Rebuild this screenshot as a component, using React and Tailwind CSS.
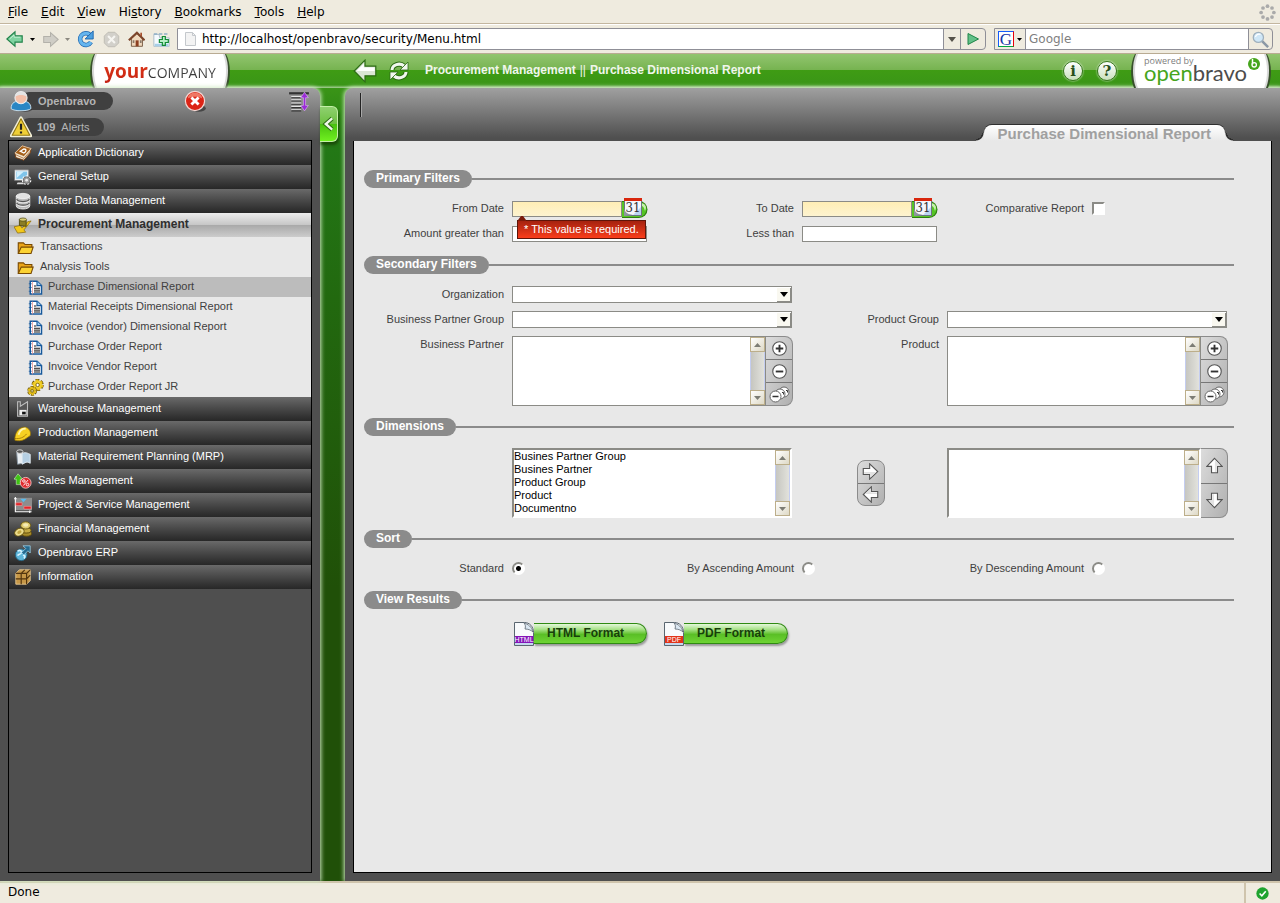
import { useState } from "react";

const MENUS = ["File", "Edit", "View", "History", "Bookmarks", "Tools", "Help"];
const MNEMONICS = { History: 2 };

const REPORTS = [
  "Purchase Dimensional Report",
  "Material Receipts Dimensional Report",
  "Invoice (vendor) Dimensional Report",
  "Purchase Order Report",
  "Invoice Vendor Report",
];

const DIMENSIONS = [
  "Busines Partner Group",
  "Busines Partner",
  "Product Group",
  "Product",
  "Documentno",
];

function Svg({ size = 20, children, className = "" }) {
  return (
    <svg
      width={size}
      height={size}
      viewBox="0 0 20 20"
      className={"shrink-0 " + className}
      aria-hidden="true"
    >
      {children}
    </svg>
  );
}

const moduleIcons = {
  dictionary: (
    <>
      <path d="M1 10 9 2l10 3-1 5-7 8L2 15z" fill="#f3ead8" stroke="#7a3c0c" />
      <path d="M1 10 9 2l10 3-8 9z" fill="#a5611c" stroke="#f4e6cf" strokeWidth=".8" />
      <path d="M2 12l9 4 7-8" fill="none" stroke="#9a5a20" strokeWidth=".8" />
      <path d="M7 8l4-2.500c3 0 3 3 0 4.500z" fill="none" stroke="#fff" strokeWidth="1.500" />
    </>
  ),
  setup: (
    <>
      <rect x="0.500" y="2" width="16" height="12" rx="1" fill="#e8eef2" stroke="#777" />
      <rect x="2.500" y="4" width="12" height="8" fill="#7fc4ea" />
      <path d="M3 11 11 4H3z" fill="#d3effc" />
      <path d="M4 16h6l1 2H3z" fill="#ddd" />
      <circle cx="14" cy="13.500" r="4" fill="#bbb" stroke="#fff" strokeWidth="2.500" strokeDasharray="2 1.500" />
      <circle cx="14" cy="13.500" r="3.800" fill="#999" stroke="#555" strokeWidth=".7" />
      <circle cx="14" cy="13.500" r="1.500" fill="#eee" />
    </>
  ),
  database: (
    <>
      <path d="M2.500 4.500v11c0 4.500 15 4.500 15 0v-11" fill="#b9b9b9" stroke="#e8e8e8" />
      <ellipse cx="10" cy="4.500" rx="7.500" ry="3" fill="#e2e2e2" stroke="#fff" strokeWidth=".7" />
      <path d="M3 8c1 3.500 13 3.500 14 0M3 12c1 3.500 13 3.500 14 0" fill="none" stroke="#555" strokeWidth="1.300" />
      <path d="M3 9.500c1 3.500 13 3.500 14 0M3 13.500c1 3.500 13 3.500 14 0" fill="none" stroke="#fff" strokeWidth=".8" />
    </>
  ),
  procurement: (
    <>
      <path d="M0 12l4 7 9-1-2-2.500 8-10-4 1-6 7-2-3z" fill="#f2c81a" stroke="#8b6a0a" strokeWidth=".8" />
      <path d="M6 3.500v7l7.500 1V4.500z" fill="#8a7d24" stroke="#4f470f" />
      <ellipse cx="10" cy="4" rx="4" ry="1.800" fill="#d8cd73" stroke="#4f470f" strokeWidth=".8" />
    </>
  ),
  warehouse: (
    <>
      <path d="M4 8V2h3v5l8-5v16H4z" fill="#555" stroke="#bdbdbd" strokeWidth="1.200" />
      <path d="M6 11h8v6H6z" fill="#eee" />
      <path d="M9 13h4v3H9z" fill="#111" />
    </>
  ),
  helmet: (
    <>
      <path d="M1 15C2 6 9 2 14 4c4 2 5 6 4 9l-6 4c-4 2-8 2-11 1z" fill="#f6d022" stroke="#8f6b05" strokeWidth=".8" />
      <path d="M5 12c1-4 4-7 8-7" fill="none" stroke="#fff6b0" strokeWidth="2" />
      <path d="M1 16c5 1 10-1 13-5" fill="none" stroke="#a87a05" />
    </>
  ),
  mrp: (
    <>
      <path d="M3 5 9 3l1 14-6 1z" fill="#e9eef2" stroke="#8795a3" />
      <path d="M9 6c4-2 6 0 9 1v10c-4-3-6 0-9 1z" fill="#b5cfe3" stroke="#e9f1f7" />
      <ellipse cx="6.500" cy="4" rx="3.500" ry="2" fill="#555" stroke="#ddd" />
    </>
  ),
  sales: (
    <>
      <path d="M4.500 2 9.500 8H7v6H2.500V8H0z" fill="#3fc414" stroke="#d8f5cc" strokeWidth=".6" />
      <circle cx="13" cy="12" r="6" fill="#e02a2f" stroke="#f7c3c3" />
      <circle cx="11" cy="10" r="1.400" fill="none" stroke="#fff" />
      <circle cx="15" cy="14" r="1.400" fill="none" stroke="#fff" />
      <path d="M10.500 15 15.500 9" stroke="#fff" />
    </>
  ),
  project: (
    <>
      <rect x="1" y="2" width="19" height="14" fill="#8d8d8d" />
      <path d="M1.500 1v16.500h18M0 3h3M17.500 16v3" fill="none" stroke="#fff" strokeWidth="1.200" />
      <path d="M7 3h7l-3.500 4z" fill="#59bdf0" />
      <path d="M2 7.500h7v3H2zM11 11.500h8v3h-8z" fill="#e3262a" stroke="#f5a6a6" strokeWidth=".6" />
    </>
  ),
  coins: (
    <>
      <ellipse cx="14" cy="15" rx="5.500" ry="3" fill="#a98d2a" stroke="#5c4a0c" />
      <ellipse cx="13.500" cy="11.500" rx="5.500" ry="3" fill="#c5ab45" stroke="#5c4a0c" />
      <ellipse cx="13" cy="6" rx="5.500" ry="4" fill="#e0cd72" stroke="#6c5810" />
      <ellipse cx="13" cy="5.500" rx="3" ry="2" fill="#f5ebb5" />
      <ellipse cx="6" cy="13.500" rx="5.500" ry="4" fill="#ecdc8c" stroke="#6c5810" transform="rotate(-28 6 13.500)" />
      <ellipse cx="6" cy="13.500" rx="2.500" ry="1.800" fill="#c2a841" transform="rotate(-28 6 13.500)" />
    </>
  ),
  globe: (
    <>
      <circle cx="8" cy="12" r="6.500" fill="#5db4d8" stroke="#245f7b" />
      <path d="M4 8c3-2 5 0 4 2s-3 1-4 3M10 13c2-1 3 1 1 3" fill="none" stroke="#d7f3ff" strokeWidth="1.800" />
      <path d="M10 2h8v8l-2.500-2.500L11 12 8.500 9.500 13 5z" fill="#246a90" stroke="#a9dcf3" strokeWidth=".8" />
    </>
  ),
  crate: (
    <>
      <path d="M2 6l4-4h12v12l-4 4H2z" fill="#c69747" stroke="#e6c893" />
      <path d="M2 6h12v12M14 6l4-4M8 6v12M2 12h12l4-4M8 6l4-4" fill="none" stroke="#53350e" strokeWidth="1.300" />
    </>
  ),
};

function FolderIcon() {
  return (
    <Svg size={17}>
      <path d="M1.500 16.500v-12h6l2 2h8v3" fill="#e9a41a" stroke="#7a4a03" strokeWidth="1.300" />
      <path d="M1.500 17 5 9.500h14L16.500 17z" fill="#fbd233" stroke="#7a4a03" strokeWidth="1.300" />
    </Svg>
  );
}

function ReportIcon() {
  return (
    <Svg size={15}>
      <path d="M3 1.500h9l6 6v11H3z" fill="#fff" stroke="#17599c" strokeWidth="2" />
      <path d="M12 1.500v6h6" fill="#9cc9ef" stroke="#17599c" strokeWidth="1.500" />
      <path d="M8 8h3M8 11h8M8 13.500h8M8 16h8" stroke="#111" strokeWidth="1.300" />
      <path d="M6 2v17" stroke="#e58c8c" />
      <path d="M1 5h4M1 10h4M1 15h4" stroke="#17599c" />
    </Svg>
  );
}

function GearsIcon() {
  return (
    <Svg size={17}>
      <circle cx="12.500" cy="7" r="5.500" fill="none" stroke="#6d570a" strokeWidth="3.500" strokeDasharray="4 1.760" />
      <circle cx="12.500" cy="7" r="5.500" fill="#f2d02c" stroke="#e8c21d" strokeWidth="2" strokeDasharray="3 2.760" />
      <circle cx="12.500" cy="7" r="2" fill="#fff" stroke="#6d570a" />
      <circle cx="6" cy="14" r="4" fill="none" stroke="#6d570a" strokeWidth="3.500" strokeDasharray="3.200 .99" />
      <circle cx="6" cy="14" r="4" fill="#d9b516" stroke="#e8c21d" strokeWidth="2" strokeDasharray="2.400 1.790" />
      <circle cx="6" cy="14" r="1.500" fill="#fff6c2" stroke="#6d570a" />
    </Svg>
  );
}

function ToolButton({ label, children, className = "" }) {
  return (
    <button type="button" aria-label={label} className={"flex items-center justify-center " + className}>
      {children}
    </button>
  );
}

function Caret({ className = "text-black" }) {
  return (
    <svg width="5" height="3" viewBox="0 0 5 3" className={className} aria-hidden="true">
      <path d="M0 0h5L2.500 3z" fill="currentColor" />
    </svg>
  );
}

function BrowserChrome() {
  return (
    <div className="bg-[#efebdf] font-['DejaVu_Sans',sans-serif] text-[12px] text-black">
      <div className="flex h-6 items-center justify-between border-b border-[#c3b69f] pl-2 pr-1 pt-px">
        <nav className="flex gap-[13px]">
          {MENUS.map((name) => {
            const at = MNEMONICS[name] ?? 0;
            return (
              <button key={name} type="button">
                {name.slice(0, at)}
                <u>{name[at]}</u>
                {name.slice(at + 1)}
              </button>
            );
          })}
        </nav>
        <Svg size={17}>
          <g fill="#aaa">
            <circle cx="10" cy="2.500" r="2.200" />
            <circle cx="15.300" cy="4.700" r="2.200" />
            <circle cx="17.500" cy="10" r="2.200" />
            <circle cx="15.300" cy="15.300" r="2.200" />
            <circle cx="10" cy="17.500" r="2.200" />
            <circle cx="4.700" cy="15.300" r="2.200" />
            <circle cx="2.500" cy="10" r="2.200" />
            <circle cx="4.700" cy="4.700" r="2.200" />
          </g>
        </Svg>
      </div>

      <div className="flex h-[30px] items-center border-b border-t border-b-[#b9ab92] border-t-white pl-1.5 pr-[7px]">
        <ToolButton label="Back">
          <Svg size={18}>
            <path d="M1 10 10 2v4.500h8v7h-8V18z" fill="#7ed3a0" stroke="#23834b" strokeWidth="1.300" />
            <path d="M4 10 9 5.500v2.500h7" fill="none" stroke="#c8f2d6" />
          </Svg>
        </ToolButton>
        <ToolButton label="Back history" className="w-4"><Caret /></ToolButton>
        <ToolButton label="Forward" className="ml-0.5">
          <Svg size={17}>
            <path d="M19 10 10 2v4.500H2v7h8V18z" fill="#cfcdc6" stroke="#b3b1aa" strokeWidth="1.200" />
          </Svg>
        </ToolButton>
        <ToolButton label="Forward history" className="w-4"><Caret className="text-[#8b8880]" /></ToolButton>
        <ToolButton label="Reload" className="ml-0.5">
          <Svg size={18}>
            <path d="M15.500 13.500a6.500 6.500 0 1 1-1-8" fill="none" stroke="#1c64ad" strokeWidth="5" />
            <path d="M15.500 13.500a6.500 6.500 0 1 1-1-8" fill="none" stroke="#65b5ee" strokeWidth="3.500" />
            <path d="M18 1v9H9z" fill="#4b9fe0" stroke="#1c64ad" />
          </Svg>
        </ToolButton>
        <ToolButton label="Stop" className="ml-2">
          <Svg size={17}>
            <path d="M6 1.500h8L18.500 6v8L14 18.500H6L1.500 14V6z" fill="#d2d0ca" stroke="#bbb8b0" />
            <path d="m6 6 8 8M14 6l-8 8" stroke="#f6f5f1" strokeWidth="2.500" />
          </Svg>
        </ToolButton>
        <ToolButton label="Home" className="ml-2">
          <Svg size={17}>
            <path d="M4 9v9h13V9l-6.500-6z" fill="#f0d9be" stroke="#6c4c34" />
            <path d="M1 11 10.500 2l9 9" fill="none" stroke="#7d452b" strokeWidth="2.500" />
            <path d="M14.500 2h2v4h-2z" fill="#a6502f" />
            <path d="M9 11h3.500v7H9z" fill="#8c3f21" />
            <path d="M5.500 11h2v3h-2zM14 11h2v3h-2z" fill="#8a7a6b" />
          </Svg>
        </ToolButton>
        <ToolButton label="New tab" className="ml-2">
          <Svg size={17}>
            <path d="M1 8V4h6l1 4h11v10H1z" fill="#f4fafe" stroke="#a3b6c4" />
            <path d="M1 3.500h4M7 3.500h4M13 3.500h4" stroke="#8fb0c8" strokeWidth="2" />
            <path d="M2 15h16v3H2z" fill="#a8cfe8" />
            <path d="M11 6.500h3.500v3.500H18v3.500h-3.500V17H11v-3.500H7.500V10H11z" fill="#b9f0c8" stroke="#128a36" strokeWidth="1.400" />
          </Svg>
        </ToolButton>

        <div className="ml-[7px] flex h-[22px] min-w-0 flex-1 rounded-r border border-[#8f8f97]">
          <span className="flex w-6 shrink-0 items-center justify-center bg-white">
            <svg width="11" height="14" viewBox="0 0 11 14" aria-hidden="true">
              <path d="M.5.5h7l3 3v10H.5z" fill="#f3f3f3" stroke="#c4c8cc" />
              <path d="M7.500.5v3h3" fill="none" stroke="#c4c8cc" />
            </svg>
          </span>
          <input
            type="text"
            aria-label="Address"
            defaultValue="http://localhost/openbravo/security/Menu.html"
            className="min-w-0 flex-1 bg-white outline-none"
          />
          <ToolButton label="Show history" className="w-[17px] border-l border-[#8f8f97] text-[#55524a]">
            <svg width="8" height="5" viewBox="0 0 8 5" aria-hidden="true"><path d="M0 0h8L4 5z" fill="currentColor" /></svg>
          </ToolButton>
          <ToolButton label="Go" className="w-[25px] border-l border-[#8f8f97]">
            <svg width="12" height="12" viewBox="0 0 12 12" aria-hidden="true">
              <path d="M1 .5 11.500 6 1 11.500z" fill="#63c088" stroke="#1e8548" />
            </svg>
          </ToolButton>
        </div>

        <div className="ml-2 flex h-[22px] w-[279px] rounded-r border border-[#8f8f97]">
          <ToolButton label="Search engine" className="w-[31px] gap-[3px] border-r border-[#8f8f97]">
            <span className="flex h-4 w-4 items-center justify-center border border-b-green-600 border-l-blue-600 border-r-red-600 border-t-blue-600 bg-white font-['Liberation_Serif',serif] text-[17px] leading-none text-[#1736a8]">
              G
            </span>
            <Caret />
          </ToolButton>
          <input
            type="text"
            aria-label="Search"
            placeholder="Google"
            className="min-w-0 flex-1 bg-white px-[3px] outline-none placeholder:text-[#808080]"
          />
          <ToolButton label="Search" className="w-6 border-l border-[#8f8f97]">
            <Svg size={17}>
              <path d="m11 11 8 8" stroke="#8b98a5" strokeWidth="3" />
              <circle cx="7.500" cy="7.500" r="6" fill="#cfe7f7" stroke="#9fb0bd" strokeWidth="1.500" />
              <path d="M4 7c1-3 4-4 6-3" fill="none" stroke="#fff" strokeWidth="1.500" />
            </Svg>
          </ToolButton>
        </div>
      </div>
    </div>
  );
}

function RoundBadge({ label, glyph }) {
  return (
    <button
      type="button"
      aria-label={label}
      className="flex h-5 w-5 items-center justify-center rounded-full border border-[#3a7a20] bg-linear-to-b from-white to-[#c9e0bd] font-['DejaVu_Serif',serif] text-[15px] font-bold leading-none text-[#28501c] shadow-[0_0_2px_#ffffff]"
    >
      {glyph}
    </button>
  );
}

function LogoPlate({ children }) {
  return (
    <div className="relative h-[34px] w-[140px] shrink-0">
      <svg width="140" height="34" viewBox="0 0 140 34" className="absolute inset-0" aria-hidden="true">
        <path d="M4 0h132c5 9 5 24 1 34H3C-1 24-1 9 4 0z" fill="#38502c" />
        <path d="M5 0h130c4 9 4 24 0 34H5C1 24 1 9 5 0z" fill="#d9d9d9" />
        <path d="M7 0h126c4 10 4 24 0 34H7C3 24 3 10 7 0z" fill="#fff" />
      </svg>
      <div className="relative h-full">{children}</div>
    </div>
  );
}

function TopBar() {
  return (
    <header className="flex h-[34px] shrink-0 bg-[linear-gradient(#92c56f_0px,#76b350_16px,#3f9c14_16px,#3a9517_31px,#a8d098_34px)]">
      <div className="w-[345px] shrink-0 pl-[90px]">
        <LogoPlate>
          <div className="flex h-full items-baseline justify-center pt-0.5 font-['Open_Sans',sans-serif] leading-[30px]">
            <span className="bg-linear-to-b from-[#e8401c] to-[#c01c10] bg-clip-text text-[19px] font-bold text-transparent">
              your
            </span>
            <span className="bg-linear-to-b from-[#777777] to-[#111111] bg-clip-text text-[14px] text-transparent">
              COMPANY
            </span>
          </div>
        </LogoPlate>
      </div>
      <div className="flex flex-1 items-center pl-2">
        <button type="button" aria-label="Go back">
          <Svg size={24}>
            <path d="M1 10 10 1v5h9v8h-9v5z" fill="#dbe6d6" stroke="#2c6b14" />
            <path d="M3 10 9 4v3h9v3z" fill="#fff" />
          </Svg>
        </button>
        <button type="button" aria-label="Refresh" className="ml-3">
          <Svg size={20}>
            <g fill="none">
              <path d="M3 9a7 6 0 0 1 12-4M17 11a7 6 0 0 1-12 4" stroke="#2c6b14" strokeWidth="5" />
              <path d="M3 9a7 6 0 0 1 12-4M17 11a7 6 0 0 1-12 4" stroke="#f1f7ee" strokeWidth="3" />
            </g>
            <path d="M19 1v8h-8zM1 19v-8h8z" fill="#f1f7ee" stroke="#2c6b14" strokeWidth=".8" />
          </Svg>
        </button>
        <h2 className="ml-4 flex gap-1 pb-0.5 text-[12px] font-bold text-[#f0f6ec]">
          <span>Procurement Management</span>
          <span className="font-normal">||</span>
          <span>Purchase Dimensional Report</span>
        </h2>
      </div>
      <div className="flex items-center gap-3.5 pr-[9px]">
        <RoundBadge label="About" glyph="i" />
        <RoundBadge label="Help" glyph="?" />
        <LogoPlate>
          <div className="flex flex-col pl-[13px] pt-0.5">
            <span className="font-['Open_Sans',sans-serif] text-[9px] leading-[10px] text-[#808080]">powered by</span>
            <span className="font-['Lato',sans-serif] text-[22px] leading-[14px] text-[#4c4c4c]">
              <span className="text-[#46a51c]">open</span>bravo
            </span>
          </div>
          <svg width="12" height="12" viewBox="0 0 12 12" className="absolute right-[11px] top-1" aria-hidden="true">
            <circle cx="6" cy="6" r="6" fill="#46a51c" />
            <path d="M4.500 1v5.500" stroke="#fff" strokeWidth="1.500" />
            <circle cx="6.200" cy="6.800" r="2.200" fill="none" stroke="#fff" strokeWidth="1.300" />
          </svg>
        </LogoPlate>
      </div>
    </header>
  );
}

function ModuleRow({ icon, children, active = false }) {
  return (
    <button
      type="button"
      className={
        active
          ? "flex h-6 w-full items-center gap-1 bg-[linear-gradient(#ececec,#c6c6c6_50%,#aaaaaa_52%,#cccccc)] pl-1 text-left text-[12px] font-bold text-[#2f2f2f]"
          : "flex h-6 w-full items-center gap-1 bg-linear-to-b from-[#6a6a6a] to-[#272727] pl-1 text-left text-[11px] text-white"
      }
    >
      <Svg size={20} className="p-px">{moduleIcons[icon]}</Svg>
      <span className="ml-px pb-0.5">{children}</span>
    </button>
  );
}

function TreeRow({ icon, children, nested = false, selected = false }) {
  return (
    <a
      href="#"
      className={
        "flex h-5 items-center text-[11px] text-[#3f3f3f] " +
        (nested ? "gap-1 pl-[18px] " : "gap-1.5 pl-2 ") +
        (selected ? "bg-[#bcbcbc]" : "")
      }
    >
      <span className="flex w-[17px] justify-center">{icon}</span>
      <span className="pb-0.5">{children}</span>
    </a>
  );
}

function Sidebar() {
  return (
    <aside className="z-10 flex w-80 shrink-0 flex-col rounded-tr-lg bg-[#4f4f4f] bg-[linear-gradient(#a0a0a0_0px,#4f4f4f_52px)] px-2 pb-2 shadow-[0_0_4px_1px_#d4ecc8]">
      <div className="flex h-[26px] items-center">
        <div className="flex items-center">
          <Svg size={22} className="z-10 ml-0.5">
            <ellipse cx="13" cy="18" rx="7" ry="2" fill="#222" opacity=".5" />
            <path d="M1 17c0-6 4-7 9-7s9 1 9 7c-3 2.500-15 2.500-18 0z" fill="#2a86c4" stroke="#d7ebf7" strokeWidth=".8" />
            <circle cx="10" cy="7" r="5.500" fill="#f4bfa8" stroke="#eee" />
            <path d="M4.500 6C5 0 15 0 15.500 6c-3-2-8-2-11 0z" fill="#e4e4e4" />
          </Svg>
          <span className="-ml-3 flex h-[18px] w-[93px] items-center rounded-full bg-[#404040] pl-[18px] text-[11px] font-bold text-[#b4b4b4]">
            Openbravo
          </span>
        </div>
        <button type="button" aria-label="Log out" className="ml-[70px]">
          <Svg size={24}>
            <ellipse cx="13" cy="16" rx="6" ry="3" fill="#222" opacity=".6" />
            <circle cx="10" cy="10" r="8" fill="#dc2416" stroke="#f3d8d4" />
            <path d="M4 8a6 5 0 0 1 12 0c-3-2-9-2-12 0z" fill="#f07765" />
            <path d="m7 7 6 6M13 7l-6 6" stroke="#fff" strokeWidth="2.400" />
          </Svg>
        </button>
        <button type="button" aria-label="Expand menu" className="ml-auto mr-0.5">
          <Svg size={22}>
            <path d="M1 2h18v2H1z" fill="#333" />
            <path d="M3 6h9M3 9h9M3 12h9M3 15h9M3 18h9" stroke="#e3e3e3" strokeWidth="1.200" />
            <path d="M3 7h9M3 10h9M3 13h9M3 16h9M3 19h9" stroke="#333" />
            <path d="m15 2 3.500 5H16v7h2.500L15 19l-3.500-5H14V7h-2.500z" fill="#9a2bd8" stroke="#e6c4f7" strokeWidth=".5" />
          </Svg>
        </button>
      </div>
      <div className="flex h-[26px] items-center">
        <Svg size={22} className="z-10 ml-0.5">
          <path d="M10 1.500 19 18H1z" fill="#f7dc55" stroke="#f3f0d8" strokeWidth="2.500" strokeLinejoin="round" />
          <path d="M10 2.500 18 17.500H2z" fill="#f0cf36" stroke="#927714" strokeLinejoin="round" />
          <path d="M10 7v5.500M10 14v2" stroke="#222" strokeWidth="2" />
        </Svg>
        <a
          href="#"
          className="-ml-3 flex h-[18px] w-[84px] items-center gap-1.5 rounded-full bg-[#404040] pl-[17px] text-[11px] text-[#b4b4b4]"
        >
          <b>109</b> Alerts
        </a>
      </div>

      <nav className="flex-1 border border-black">
        <ModuleRow icon="dictionary">Application Dictionary</ModuleRow>
        <ModuleRow icon="setup">General Setup</ModuleRow>
        <ModuleRow icon="database">Master Data Management</ModuleRow>
        <ModuleRow icon="procurement" active>Procurement Management</ModuleRow>
        <div className="bg-[#e8e8e8]">
          <TreeRow icon={<FolderIcon />}>Transactions</TreeRow>
          <TreeRow icon={<FolderIcon />}>Analysis Tools</TreeRow>
          {REPORTS.map((name, i) => (
            <TreeRow key={name} icon={<ReportIcon />} nested selected={i === 0}>
              {name}
            </TreeRow>
          ))}
          <TreeRow icon={<GearsIcon />} nested>Purchase Order Report JR</TreeRow>
        </div>
        <ModuleRow icon="warehouse">Warehouse Management</ModuleRow>
        <ModuleRow icon="helmet">Production Management</ModuleRow>
        <ModuleRow icon="mrp">Material Requirement Planning (MRP)</ModuleRow>
        <ModuleRow icon="sales">Sales Management</ModuleRow>
        <ModuleRow icon="project">Project &amp; Service Management</ModuleRow>
        <ModuleRow icon="coins">Financial Management</ModuleRow>
        <ModuleRow icon="globe">Openbravo ERP</ModuleRow>
        <ModuleRow icon="crate">Information</ModuleRow>
      </nav>
    </aside>
  );
}

function Section({ title, className = "", children }) {
  return (
    <section className={className}>
      <div className="flex items-center">
        <h3 className="flex h-[18px] items-center rounded-full bg-[#8b8b8b] pb-0.5 pl-3 pr-3 text-[12px] font-bold text-white">
          {title}
        </h3>
        <span className="h-0.5 flex-1 bg-[#8b8b8b]" />
      </div>
      <div className="-mr-[3px] ml-[3px]">{children}</div>
    </section>
  );
}

function Row({ className = "", children }) {
  return <div className={"grid min-h-[25px] grid-cols-6 " + className}>{children}</div>;
}

function Label({ htmlFor, className = "", children }) {
  return (
    <label htmlFor={htmlFor} className={"self-center whitespace-nowrap pr-2 text-right " + className}>
      {children}
    </label>
  );
}

function DateField({ id, error }) {
  return (
    <div className="relative flex items-center">
      <input
        id={id}
        type="text"
        className="h-4 w-[110px] border border-[#8b8b86] bg-linear-to-b from-[#ffeeb5] to-[#fdf3cf] px-1 outline-none"
      />
      <button type="button" aria-label="Pick a date" className="-my-1">
        <svg width="27" height="21" viewBox="0 0 27 21" aria-hidden="true">
          <path d="M0 3h17a8 8 0 0 1 0 17H0z" fill="#2b7d10" />
          <path d="M0 4h17a7 7 0 0 1 0 15H0z" fill="#56c425" />
          <path d="M19 5c5 1 6 4 4 8-1-4-2-5-4-5z" fill="#c5f0ad" />
          <rect x="2.500" y="1.500" width="17" height="16" fill="#f4f6fa" stroke="#6b7480" />
          <path d="M2 0h18v3H2z" fill="#d8260c" />
          <path d="M11 17h8V9z" fill="#bcd5f2" />
          <text x="11" y="14" textAnchor="middle" fontSize="13" fontFamily="DejaVu Serif Condensed, DejaVu Serif" fill="#333">31</text>
          <path d="M2 10c1 5 4 6 9 7l-9 1z" fill="#8e969e" />
        </svg>
      </button>
      {error && (
        <div
          role="alert"
          className="absolute left-[5px] top-6 z-10 whitespace-nowrap border border-[#5f1509] bg-linear-to-b from-[#a5220f] to-[#fb3d1a] px-1.5 pb-px leading-4 text-white"
        >
          <svg width="8" height="5" viewBox="0 0 8 5" className="absolute -top-[5px] left-0" aria-hidden="true">
            <path d="M0 5V4l3-4h2l3 4v1z" fill="#7a1a0b" />
          </svg>
          {error}
        </div>
      )}
    </div>
  );
}

function AmountField({ id }) {
  return (
    <div className="flex items-center">
      <input id={id} type="text" className="h-4 w-[135px] border border-[#8b8b86] bg-white px-1 outline-none" />
    </div>
  );
}

function Combo({ id }) {
  return (
    <div className="relative col-span-2 mr-2.5 h-[17px] self-center">
      <select id={id} className="h-full w-full appearance-none border border-[#8b8b86] bg-white px-1 outline-none" />
      <span className="pointer-events-none absolute bottom-0 right-0 top-0.5 flex w-[15px] items-center justify-center border-b-2 border-r-2 border-[#8b8b86] bg-[#f9f8f0]">
        <svg width="8" height="5" viewBox="0 0 8 5" aria-hidden="true"><path d="M0 0h8L4 5z" /></svg>
      </span>
    </div>
  );
}

function ScrollArrow({ down = false }) {
  return (
    <button
      type="button"
      aria-label={down ? "Scroll down" : "Scroll up"}
      className="flex h-[15px] items-center justify-center border border-[#bcae8a] bg-linear-to-br from-white to-[#ded9c6]"
    >
      <svg width="7" height="4" viewBox="0 0 7 4" className={down ? "rotate-180" : ""} aria-hidden="true">
        <path d="M0 4h7L3.500 0z" fill="#7c7c74" />
      </svg>
    </button>
  );
}

function ScrollTrack() {
  return (
    <div className="flex w-[15px] shrink-0 flex-col justify-between border-x border-[#c4cdf0] bg-linear-to-r from-[#c6c6c0] to-[#e2e2dc] [&>button]:-mx-px">
      <ScrollArrow />
      <ScrollArrow down />
    </div>
  );
}

// Listbox with its own always visible scrollbar
function ListBox({ id, label, items = [], sunken = false }) {
  return (
    <div
      className={
        sunken
          ? "flex h-[70px] min-w-0 flex-1 border-2 border-b-white border-l-[#8b8b86] border-r-white border-t-[#8b8b86] bg-white"
          : "flex h-[70px] min-w-0 flex-1 border border-[#8b8b86] bg-white"
      }
    >
      <select
        id={id}
        aria-label={label}
        multiple
        className="min-w-0 flex-1 overflow-hidden bg-white text-[11px] text-black outline-none [scrollbar-width:none]"
      >
        {items.map((item) => (
          <option key={item} className="h-[13px] min-h-0 p-0 leading-[13px]">
            {item}
          </option>
        ))}
      </select>
      <ScrollTrack />
    </div>
  );
}

function SideButtons({ children }) {
  return (
    <div className="flex h-[70px] w-[27px] shrink-0 flex-col divide-y divide-[#777777] rounded-r-lg border border-l-0 border-[#8b8b8b] bg-linear-to-br from-[#dcdcdc] to-[#b0b0b0]">
      {children}
    </div>
  );
}

function CircleSign({ plus = false }) {
  return (
    <Svg size={15}>
      <circle cx="10" cy="10" r="9" fill="#fff" stroke="#555" strokeWidth="1.500" />
      <path d={plus ? "M5 10h10M10 5v10" : "M5 10h10"} stroke="#333" strokeWidth="2.500" />
    </Svg>
  );
}

function Picker({ id }) {
  return (
    <div className="col-span-2 mr-[9px] flex">
      <ListBox id={id} />
      <SideButtons>
        <ToolButton label="Add" className="flex-1"><CircleSign plus /></ToolButton>
        <ToolButton label="Remove" className="flex-1"><CircleSign /></ToolButton>
        <ToolButton label="Remove all" className="flex-1">
          <svg width="21" height="17" viewBox="0 0 21 17" aria-hidden="true">
            <g fill="#fff" stroke="#666">
              <circle cx="15" cy="6" r="5" />
              <circle cx="11" cy="8" r="5" />
              <circle cx="6.500" cy="10.500" r="5.500" />
            </g>
            <path d="M3.500 10.500h6" stroke="#333" strokeWidth="1.500" />
            <path d="M13 6.500h1.500v2M17 4.500h1.500v2" fill="none" stroke="#333" />
          </svg>
        </ToolButton>
      </SideButtons>
    </div>
  );
}

function BlockArrow({ rotate = 0 }) {
  return (
    <Svg size={17}>
      <g transform={`rotate(${rotate} 10 10)`}>
        <path d="M1.500 6.500H9V1l9.500 9L9 19v-5.500H1.500z" fill="#fff" stroke="#555" strokeWidth="1.300" />
        <path d="M2.500 10.500H17L9.700 17v-4.500H2.500z" fill="#e2e2e2" />
      </g>
    </Svg>
  );
}

function SortOption({ value, current, onChange, children }) {
  const id = "sort-" + value;
  return (
    <>
      <Label htmlFor={id}>{children}</Label>
      <div className="flex items-center">
        <input
          id={id}
          type="radio"
          name="sort"
          checked={current === value}
          onChange={() => onChange(value)}
          className="h-[13px] w-[13px] appearance-none rounded-full border-2 border-b-white border-l-[#8b8b86] border-r-white border-t-[#8b8b86] bg-white checked:bg-[radial-gradient(#000000_2px,#ffffff_3px)]"
        />
      </div>
    </>
  );
}

function FormatButton({ tag, tagClass, children }) {
  return (
    <button type="button" className="flex h-[25px] items-center">
      <span className="relative z-10 flex h-6 w-5 flex-col">
        <svg width="20" height="24" viewBox="0 0 20 24" className="absolute inset-0" aria-hidden="true">
          <path d="M.5.5h10c5 0 9 4 9 10v13H.5z" fill="#f8fafc" stroke="#5a6670" />
          <path d="M10 1c4 1 8 4 9 9-2-2-5-3-8-3 1-3 0-5-1-6z" fill="#dbe7f2" stroke="#5a6670" strokeWidth=".8" />
          <path d="M1 21h18v2H1z" fill="#c4d8ee" />
        </svg>
        <span
          className={"relative mx-px mt-3.5 flex h-[7px] items-center justify-center text-[7px] leading-none text-white " + tagClass}
        >
          {tag}
        </span>
      </span>
      <span className="flex h-[21px] items-center rounded-r-full border border-l-0 border-[#2f8a12] bg-[linear-gradient(#e4f8da,#a4e083_30%,#5abf26_55%,#6ed434)] pb-px pl-[13px] pr-[22px] text-[12px] font-bold text-[#17400a] shadow-[1px_2px_2px_#999999]">
        {children}
      </span>
    </button>
  );
}

function ReportForm() {
  const [sort, setSort] = useState("standard");
  return (
    <form
      className="flex-1 border-x border-b border-black bg-[#e8e8e8] pb-4 pl-2.5 pr-[37px] pt-[29px] text-[11px] text-[#3f3f3f]"
      onSubmit={(e) => e.preventDefault()}
    >
      <Section title="Primary Filters">
        <Row className="mt-2">
          <Label htmlFor="from-date">From Date</Label>
          <DateField id="from-date" error="* This value is required." />
          <Label htmlFor="to-date">To Date</Label>
          <DateField id="to-date" />
          <Label htmlFor="comparative">Comparative Report</Label>
          <div className="flex items-center">
            <input
              id="comparative"
              type="checkbox"
              className="h-[13px] w-[13px] appearance-none border-2 border-b-white border-l-[#8b8b86] border-r-white border-t-[#8b8b86] bg-white checked:bg-[#555555]"
            />
          </div>
        </Row>
        <Row>
          <Label htmlFor="amount-from">Amount greater than</Label>
          <AmountField id="amount-from" />
          <Label htmlFor="amount-to">Less than</Label>
          <AmountField id="amount-to" />
        </Row>
      </Section>

      <Section title="Secondary Filters" className="mt-2.5">
        <Row className="mt-2">
          <Label htmlFor="organization">Organization</Label>
          <Combo id="organization" />
        </Row>
        <Row>
          <Label htmlFor="partner-group">Business Partner Group</Label>
          <Combo id="partner-group" />
          <Label htmlFor="product-group">Product Group</Label>
          <Combo id="product-group" />
        </Row>
        <Row className="pt-1">
          <Label htmlFor="partner" className="self-start">Business Partner</Label>
          <Picker id="partner" />
          <Label htmlFor="product" className="self-start">Product</Label>
          <Picker id="product" />
        </Row>
      </Section>

      <Section title="Dimensions" className="mt-3">
        <Row className="pt-3">
          <div className="col-span-2 col-start-2 mr-2.5 flex">
            <ListBox label="Available dimensions" items={DIMENSIONS} sunken />
          </div>
          <div className="flex items-center justify-center pr-2">
            <div className="flex h-[46px] w-7 flex-col divide-y divide-[#777777] rounded-lg border border-[#8b8b8b] bg-linear-to-br from-[#dcdcdc] to-[#b0b0b0]">
              <ToolButton label="Add dimension" className="flex-1"><BlockArrow /></ToolButton>
              <ToolButton label="Remove dimension" className="flex-1"><BlockArrow rotate={180} /></ToolButton>
            </div>
          </div>
          <div className="col-span-2 mr-[9px] flex">
            <ListBox label="Selected dimensions" sunken />
            <SideButtons>
              <ToolButton label="Move up" className="flex-1"><BlockArrow rotate={-90} /></ToolButton>
              <ToolButton label="Move down" className="flex-1"><BlockArrow rotate={90} /></ToolButton>
            </SideButtons>
          </div>
        </Row>
      </Section>

      <Section title="Sort" className="mt-3">
        <Row className="mt-2">
          <SortOption value="standard" current={sort} onChange={setSort}>Standard</SortOption>
          <SortOption value="ascending" current={sort} onChange={setSort}>By Ascending Amount</SortOption>
          <SortOption value="descending" current={sort} onChange={setSort}>By Descending Amount</SortOption>
        </Row>
      </Section>

      <Section title="View Results" className="mt-2.5">
        <Row className="pt-3">
          <div className="col-span-3 col-start-2 flex gap-[17px] pl-0.5">
            <FormatButton tag="HTML" tagClass="bg-[#8414b8]">HTML Format</FormatButton>
            <FormatButton tag="PDF" tagClass="bg-[#e2341a]">PDF Format</FormatButton>
          </div>
        </Row>
      </Section>
    </form>
  );
}

export default function App() {
  return (
    <div className="flex min-h-screen flex-col overflow-x-hidden bg-[#205008] font-['Liberation_Sans',Arial,sans-serif]">
      <BrowserChrome />
      <TopBar />
      <div className="flex flex-1 bg-[linear-gradient(#3a9517_0px,#237816_60px,#22690f_210px,#205008_500px)]">
        <Sidebar />
        <div className="z-10 w-[25px] shrink-0 pt-[18px]">
          <button
            type="button"
            aria-label="Collapse menu"
            className="flex h-9 w-[18px] items-center justify-center rounded-r-md border border-l-0 border-[#c4f0a8] bg-[linear-gradient(#8fd070,#6cc040_50%,#48c010_50%,#70f020)] shadow-[1px_3px_3px_#1a4a08]"
          >
            <Svg size={16}>
              <path d="m14 3-8 7 8 7" fill="none" stroke="#2c6b14" strokeWidth="5.500" />
              <path d="m14 3-8 7 8 7" fill="none" stroke="#eef8e8" strokeWidth="3" />
            </Svg>
          </button>
        </div>
        <main className="flex min-w-0 flex-1 flex-col rounded-tl-lg bg-[#4f4f4f] bg-[linear-gradient(#a0a0a0_0px,#4f4f4f_50px)] pb-2 pl-2 pr-2 shadow-[0_0_4px_1px_#d4ecc8]">
          <div className="flex h-[53px] items-end justify-between pl-[7px] pr-[47px]">
            <span className="mb-6 h-6 w-0.5 self-end border-l border-r border-l-[#222222] border-r-[#a8a8a8]" />
            <h1 className="relative flex h-4 items-center rounded-t-lg bg-linear-to-b from-white to-[#e8e8e8] px-3.5 text-[15px] font-bold leading-none text-[#a0a0a0] shadow-[0_-1px_0_#2f2f2f]">
              <span className="absolute -left-2 bottom-0 h-2 w-2 bg-[radial-gradient(circle_at_0_0,transparent_6px,#2f2f2f_6px,#2f2f2f_7px,#e8e8e8_8px)]" />
              <span className="absolute -right-2 bottom-0 h-2 w-2 bg-[radial-gradient(circle_at_100%_0,transparent_6px,#2f2f2f_6px,#2f2f2f_7px,#e8e8e8_8px)]" />
              Purchase Dimensional Report
            </h1>
          </div>
          <ReportForm />
        </main>
      </div>
      <footer className="flex h-[22px] shrink-0 items-stretch border-t-2 border-[#cfc4ac] bg-[#efebdf] font-['DejaVu_Sans',sans-serif] text-[12px] text-black">
        <span className="flex flex-1 items-center pb-0.5 pl-2">Done</span>
        <span className="flex w-9 items-center justify-center border-l-2 border-[#cfc4ac] pr-0.5">
          <Svg size={13}>
            <circle cx="10" cy="10" r="9.500" fill="#1fa32f" />
            <path d="m5.500 10 3.500 3.500 6-7" fill="none" stroke="#fff" strokeWidth="2.500" />
          </Svg>
        </span>
      </footer>
    </div>
  );
}
